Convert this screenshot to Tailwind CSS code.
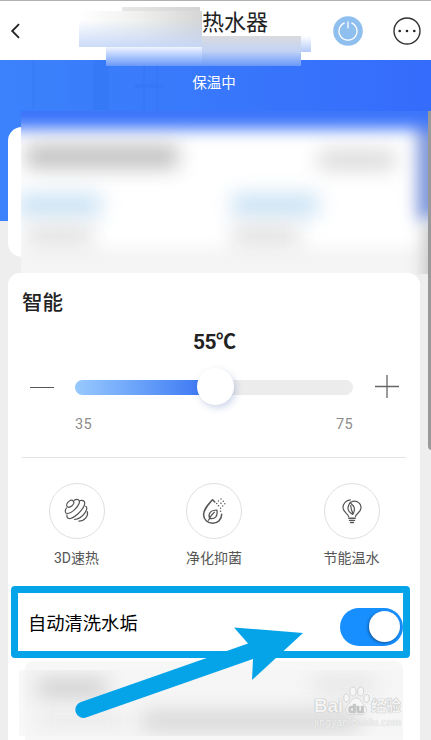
<!DOCTYPE html>
<html lang="zh-CN">
<head>
    <meta charset="UTF-8">
    <meta name="viewport" content="width=device-width, initial-scale=1.0">
    <title>热水器</title>
    <script src="https://cdn.jsdelivr.net/npm/@tailwindcss/browser@4"></script>
</head>
<body class="bg-[#eeeeee] font-['Roboto','Noto_Sans_CJK_SC',sans-serif] text-[#222]">
    <div class="relative w-[431px] h-[740px] overflow-hidden">
        <!-- Header -->
        <header class="relative flex items-center h-[60px] bg-white border-t border-[#b0b0b0]">
            <svg class="ml-[10px] w-[10px] h-4" viewBox="0 0 10 16" fill="none" stroke="#222" stroke-width="1.8"><path d="M9 1.2 2.2 8 9 14.8"/></svg>
            <h1 class="ml-[182px] w-[66px] text-[22px] leading-[30px] whitespace-nowrap -mt-[16px]">热水器</h1>
            <svg class="ml-[65px] w-[30px] h-[30px]" viewBox="0 0 30 30" fill="none">
                <circle cx="15" cy="15" r="14.8" fill="#8fbfee"/>
                <path d="M11.6 6.8a9 9 0 1 0 6.8 0M15 5.5v7" stroke="#fff" stroke-width="1.3"/>
            </svg>
            <svg class="ml-[30px] w-7 h-7" viewBox="0 0 28 28">
                <circle cx="14" cy="14" r="13" fill="none" stroke="#333" stroke-width="1.4"/>
                <g fill="#222"><circle cx="6.7" cy="14" r="1.3"/><circle cx="14" cy="14" r="1.3"/><circle cx="21.3" cy="14" r="1.3"/></g>
            </svg>
            <!-- Masked device name -->
            <div class="absolute left-[122px] top-[6px] w-[78px] h-[5px] bg-linear-to-r from-[#e6e7e6] to-[#d4d4d4]"></div>
            <div class="absolute left-[106px] top-[46px] w-[195px] h-[19px] bg-linear-to-b from-[#f1f5fd] to-[#6a98f8]"></div>
            <div class="absolute left-[202px] top-[35px] w-[99px] h-[30px] bg-linear-to-b from-[#dadbde] via-[#c3d3f5] to-[#6a98f8]"></div>
            <div class="absolute left-[301px] top-[35px] w-[10px] h-4 bg-linear-to-b from-white to-[#b5caf8]"></div>
            <div class="absolute left-[79px] top-[10px] w-[123px] h-9 bg-linear-to-r from-white via-[#eff0ee] to-[#d4d5d4]">
                <div class="h-full bg-linear-to-b from-transparent from-25% to-[#c5d7f8]/90"></div>
            </div>
        </header>

        <!-- Status banner -->
        <section class="h-[67px] relative">
            <div class="absolute inset-x-0 top-0 h-[161px] -z-10 bg-linear-to-r from-[#3c82fb] to-[#356cfb]">
                <div class="flex h-full opacity-30">
                    <div class="ml-8 w-[2px] h-[50px] bg-[#3474ef]"></div>
                    <div class="ml-9 w-[13px] h-[50px] bg-[#3b7bf8]"></div>
                    <div class="ml-[10px] w-[16px] h-[50px] bg-[#2f70f0]"></div>
                    <div class="ml-[26px] mt-6 w-[28px] h-[4px] bg-[#3070ee]"></div>
                    <div class="-ml-[20px] w-[2px] h-[50px] bg-[#3070ee]"></div>
                    <div class="ml-[11px] w-[2px] h-[50px] bg-[#3070ee]"></div>
                </div>
            </div>
            <p class="pt-[14px] pr-[3px] text-center text-[14.5px] leading-[20px] text-white">保温中</p>
        </section>

        <!-- Masked status card -->
        <section class="ml-2 w-[412px] h-[130px] rounded-[14px] bg-white"></section>
        <div class="absolute left-[21px] top-[111px] w-[408px] h-[163px] overflow-hidden bg-[#f5f5f5]">
            <div class="absolute -inset-x-6 -top-6 h-[160px] bg-white blur-[8px]"></div>
            <div class="absolute left-[396px] top-0 w-[40px] h-[109px] bg-[#7f97dc] blur-[8px]"></div>
            <div class="absolute left-[402px] top-[112px] w-[30px] h-[70px] bg-[#c8c8c8] blur-[8px]"></div>
            <div class="absolute -inset-x-6 -top-6 h-[42px] bg-[#3b74fa] blur-[8px]"></div>
            <div class="absolute left-[5px] top-[34px] w-[152px] h-[23px] bg-[#a8a8a8]/75 blur-[10px]"></div>
            <div class="absolute left-[298px] top-[40px] w-[76px] h-[18px] bg-[#c4c4c4]/70 blur-[10px]"></div>
            <div class="absolute -left-[4px] top-[83px] w-[84px] h-[22px] bg-[#bedcf2]/85 blur-[10px]"></div>
            <div class="absolute left-[211px] top-[83px] w-[86px] h-[22px] bg-[#bedcf2]/85 blur-[10px]"></div>
            <div class="absolute left-[4px] top-[116px] w-[68px] h-[17px] bg-[#cfcfcf]/70 blur-[10px]"></div>
            <div class="absolute left-[211px] top-[116px] w-[68px] h-[17px] bg-[#cfcfcf]/70 blur-[10px]"></div>
        </div>

        <!-- Smart card -->
        <main class="relative mt-4 ml-2 w-[412px] h-[467px] rounded-t-[12px] bg-white">
            <h2 class="pt-[15px] pl-[14px] text-[20.5px] leading-[30px] font-medium">智能</h2>
            <p class="mt-[10px] text-center text-[21px] leading-[26px] font-bold tracking-[-0.5px]">55<span class="font-['Noto_Sans_CJK_SC'] text-[20px] tracking-[-1px]">℃</span></p>

            <!-- Temperature slider -->
            <div class="flex items-center mt-[12px] h-10">
                <div class="ml-[22px] w-6 h-px bg-[#555]"></div>
                <div class="relative ml-[21px] mt-[1px] w-[278px] h-[15px] rounded-full bg-[#ececec]">
                    <div class="w-[140px] h-full rounded-l-full bg-linear-to-r from-[#98c9fd] to-[#356ff2]"></div>
                    <div class="absolute left-[122px] -top-[12px] w-[37px] h-[37px] rounded-full bg-white shadow-[2px_3px_7px_rgba(60,90,170,0.25)]"></div>
                </div>
                <svg class="ml-[22px] w-6 h-6" viewBox="0 0 24 24" stroke="#666" stroke-width="1.3"><path d="M0 11.5h24M12 0v23"/></svg>
            </div>
            <div class="flex justify-between mt-[8px] mx-[67px] text-[14.5px] leading-[20px] tracking-[0.3px] text-[#8c8c8c]">
                <span>35</span><span>75</span>
            </div>

            <!-- Modes -->
            <div class="mt-[22px] mx-[14px] border-t border-[#e5e5e5]"></div>
            <div class="flex justify-between pt-[25px] px-[29px] text-[14px] text-[#555]">
                <div class="flex flex-col items-center w-[79px]">
                    <div class="flex items-center justify-center w-[56px] h-[56px] rounded-full border border-[#dfdfdf]">
                        <svg class="w-7 h-7" viewBox="0 0 28 28" fill="none" stroke="#555" stroke-width="1.2" stroke-linecap="round">
                            <ellipse cx="7.2" cy="6.8" rx="4.1" ry="2.7" transform="rotate(-43 7.2 6.8)"/>
                            <path d="M11.2 3.3c3.2-2 6.2-.3 4.9 3.2C14.6 10.8 8 16.5 4.2 16.5 1.8 16.5 1.9 13.5 3.4 11"/>
                            <path d="M17 3.6c4.6-.8 5.6 1.8 4 5.4C18.7 14 12 20.5 7.5 21.5 4.2 22 3.7 20 3.9 17.8"/>
                            <path d="M22.7 9.3c2 1.2 1 4-1 6.9-2.5 3.6-6.5 6-10.2 6.3"/>
                            <path d="M24.3 14.6c1.5 4.5-3.3 9.6-8.3 9.6"/>
                        </svg>
                    </div>
                    <p class="mt-[9px] leading-[20px]">3D速热</p>
                </div>
                <div class="flex flex-col items-center w-[79px]">
                    <div class="flex items-center justify-center w-[56px] h-[56px] rounded-full border border-[#dfdfdf]">
                        <svg class="w-7 h-7" viewBox="0 0 28 28" fill="none" stroke="#555" stroke-width="1.5" stroke-linecap="round" stroke-linejoin="round">
                            <path d="M14.8 5 12.5 2.8C7.5 8.5 3.6 12.5 3.6 17.5c0 5 4 8.8 9.1 8.8s9-4 9-9"/>
                            <path stroke-width="1.2" d="M8.5 23.2c2-4.5 4-6.5 5.8-8M9.7 21.5c-2-4.5.5-8.5 7.3-8.5.8 6-1.5 9.5-7.3 8.5"/>
                            <g fill="#555" stroke="none"><circle cx="21" cy="2" r=".7"/><circle cx="18.5" cy="4" r=".7"/><circle cx="23.3" cy="4.3" r=".7"/><circle cx="16.7" cy="6.5" r=".7"/><circle cx="20.9" cy="6.2" r=".8"/><circle cx="24.8" cy="6.8" r=".7"/><circle cx="18.5" cy="8.7" r=".8"/><circle cx="22.7" cy="9" r=".7"/><circle cx="20.5" cy="11.3" r=".7"/><circle cx="20.6" cy="14.3" r=".7"/></g>
                        </svg>
                    </div>
                    <p class="mt-[9px] leading-[20px]">净化抑菌</p>
                </div>
                <div class="flex flex-col items-center w-[79px]">
                    <div class="flex items-center justify-center w-[56px] h-[56px] rounded-full border border-[#dfdfdf]">
                        <svg class="w-7 h-7" viewBox="0 0 28 28" fill="none" stroke="#555" stroke-width="1.2" stroke-linecap="round" stroke-linejoin="round">
                            <path d="M10.6 19.8c0-3.3-5.6-4-5.6-9.3 0-4 3.2-7.3 7.3-7.7M13.2 5C17.5 2.8 23 5.5 23 10.8c0 5-5.5 5.6-5.5 9"/>
                            <path d="M12.2 5.2c-.8 2-2.2 3-2.2 6 0 3 2 4.5 4.8 6.2 2-3.5 2.2-6 .7-8.2-1-1.5-2.5-2-3.3-4M12.7 8.5c.3 3 .8 5 2 7.2"/>
                            <path stroke-width="1.4" d="M10.8 21.2h6.400M11.5 23.4h5M12.5 25.5h3"/>
                        </svg>
                    </div>
                    <p class="mt-[9px] leading-[20px]">节能温水</p>
                </div>
            </div>

            <!-- Auto clean -->
            <div class="flex items-center justify-between mt-[18px] ml-[3px] w-[399px] h-[72px] pl-[10px] border-[7px] border-[#05a4e9] rounded-[4px]">
                <span class="mt-[3px] text-[18.3px] leading-[26px] text-black">自动清洗水垢</span>
                <div class="flex items-center justify-end mt-[9px] w-[63px] h-[38px] pr-[3px] rounded-full bg-[#178fff]">
                    <div class="w-[31px] h-[31px] rounded-full bg-white shadow-[-1px_1px_3px_rgba(0,0,0,0.4)]"></div>
                </div>
            </div>

            <!-- Masked footer card -->
            <div class="mt-[3px] ml-[17px] w-[378px] h-[81px] rounded-t-[8px] bg-[#f7f7f7]"></div>
            <div class="absolute left-[11px] top-[397px] w-[384px] h-[66px] overflow-hidden bg-[#f5f5f5]/70">
                <div class="absolute left-[18px] top-[8px] w-[70px] h-[20px] bg-[#c0c0c0]/70 blur-[10px]"></div>
                <div class="absolute left-[20px] top-[46px] w-[85px] h-[10px] bg-[#dedede]/60 blur-[8px]"></div>
                <div class="absolute left-[123px] top-[42px] w-[217px] h-[18px] bg-[#c4c4c4]/70 blur-[10px]"></div>
                <div class="absolute left-[295px] top-[8px] w-[60px] h-[14px] bg-[#dcdcdc]/80 blur-[10px]"></div>
            </div>
        </main>

        <!-- Arrow -->
        <svg class="absolute left-0 top-0 w-[431px] h-[740px]" viewBox="0 0 431 740" fill="#05a4e9">
            <path d="M81 702 248 643.5 234 627.5 303 633 252 680 253 659 86 717.5A8 8 0 0 1 81 702Z"/>
        </svg>

        <!-- Watermark -->
        <div class="absolute left-[314px] top-[685px] w-[90px] text-[#f4f4f4] font-['Liberation_Sans','Noto_Sans_CJK_SC',sans-serif]">
            <div class="flex items-center h-[32px] [text-shadow:0_0_1px_#aaa,0_0_1px_#bbb]">
                <span class="mt-[10px] w-[29px] text-[19px] leading-5 font-bold tracking-[-0.3px]">Bai</span>
                <svg class="w-[27px] h-[30px]" viewBox="0 0 27 30" fill="#f6f6f6" stroke="#cfcfcf" stroke-width=".8">
                    <ellipse cx="3.5" cy="12" rx="2.8" ry="4" transform="rotate(-10 3.5 12)"/>
                    <ellipse cx="10" cy="5.5" rx="3" ry="4.5"/>
                    <ellipse cx="17.7" cy="5.5" rx="3" ry="4.5" transform="rotate(10 17.7 5.5)"/>
                    <ellipse cx="23.5" cy="12.5" rx="2.8" ry="4" transform="rotate(10 23.5 12.5)"/>
                    <path d="M13 12c4 0 5 4 8.5 7.5C26 24 22.5 29 18 28.5c-3-.5-6-.5-9 0-5 .7-8.5-4.5-4.500-9C7.5 16.5 9 12 13 12Z"/>
                    <text x="13.3" y="26.5" text-anchor="middle" font-size="13" font-weight="bold" fill="#c8c8c8" stroke="none">du</text>
                </svg>
                <span class="mt-[10px] ml-[1px] text-[15px] leading-5 font-bold whitespace-nowrap">经验</span>
            </div>
            <p class="text-[10px] leading-3 tracking-[0.4px] whitespace-nowrap [text-shadow:0_0_1px_#bbb]">jingyan.baidu.com</p>
        </div>

        <!-- Scrollbar -->
        <div class="absolute left-[428px] top-[111px] w-1 h-[339px] rounded-bl-sm bg-[#999]"></div>
    </div>
</body>
</html>
